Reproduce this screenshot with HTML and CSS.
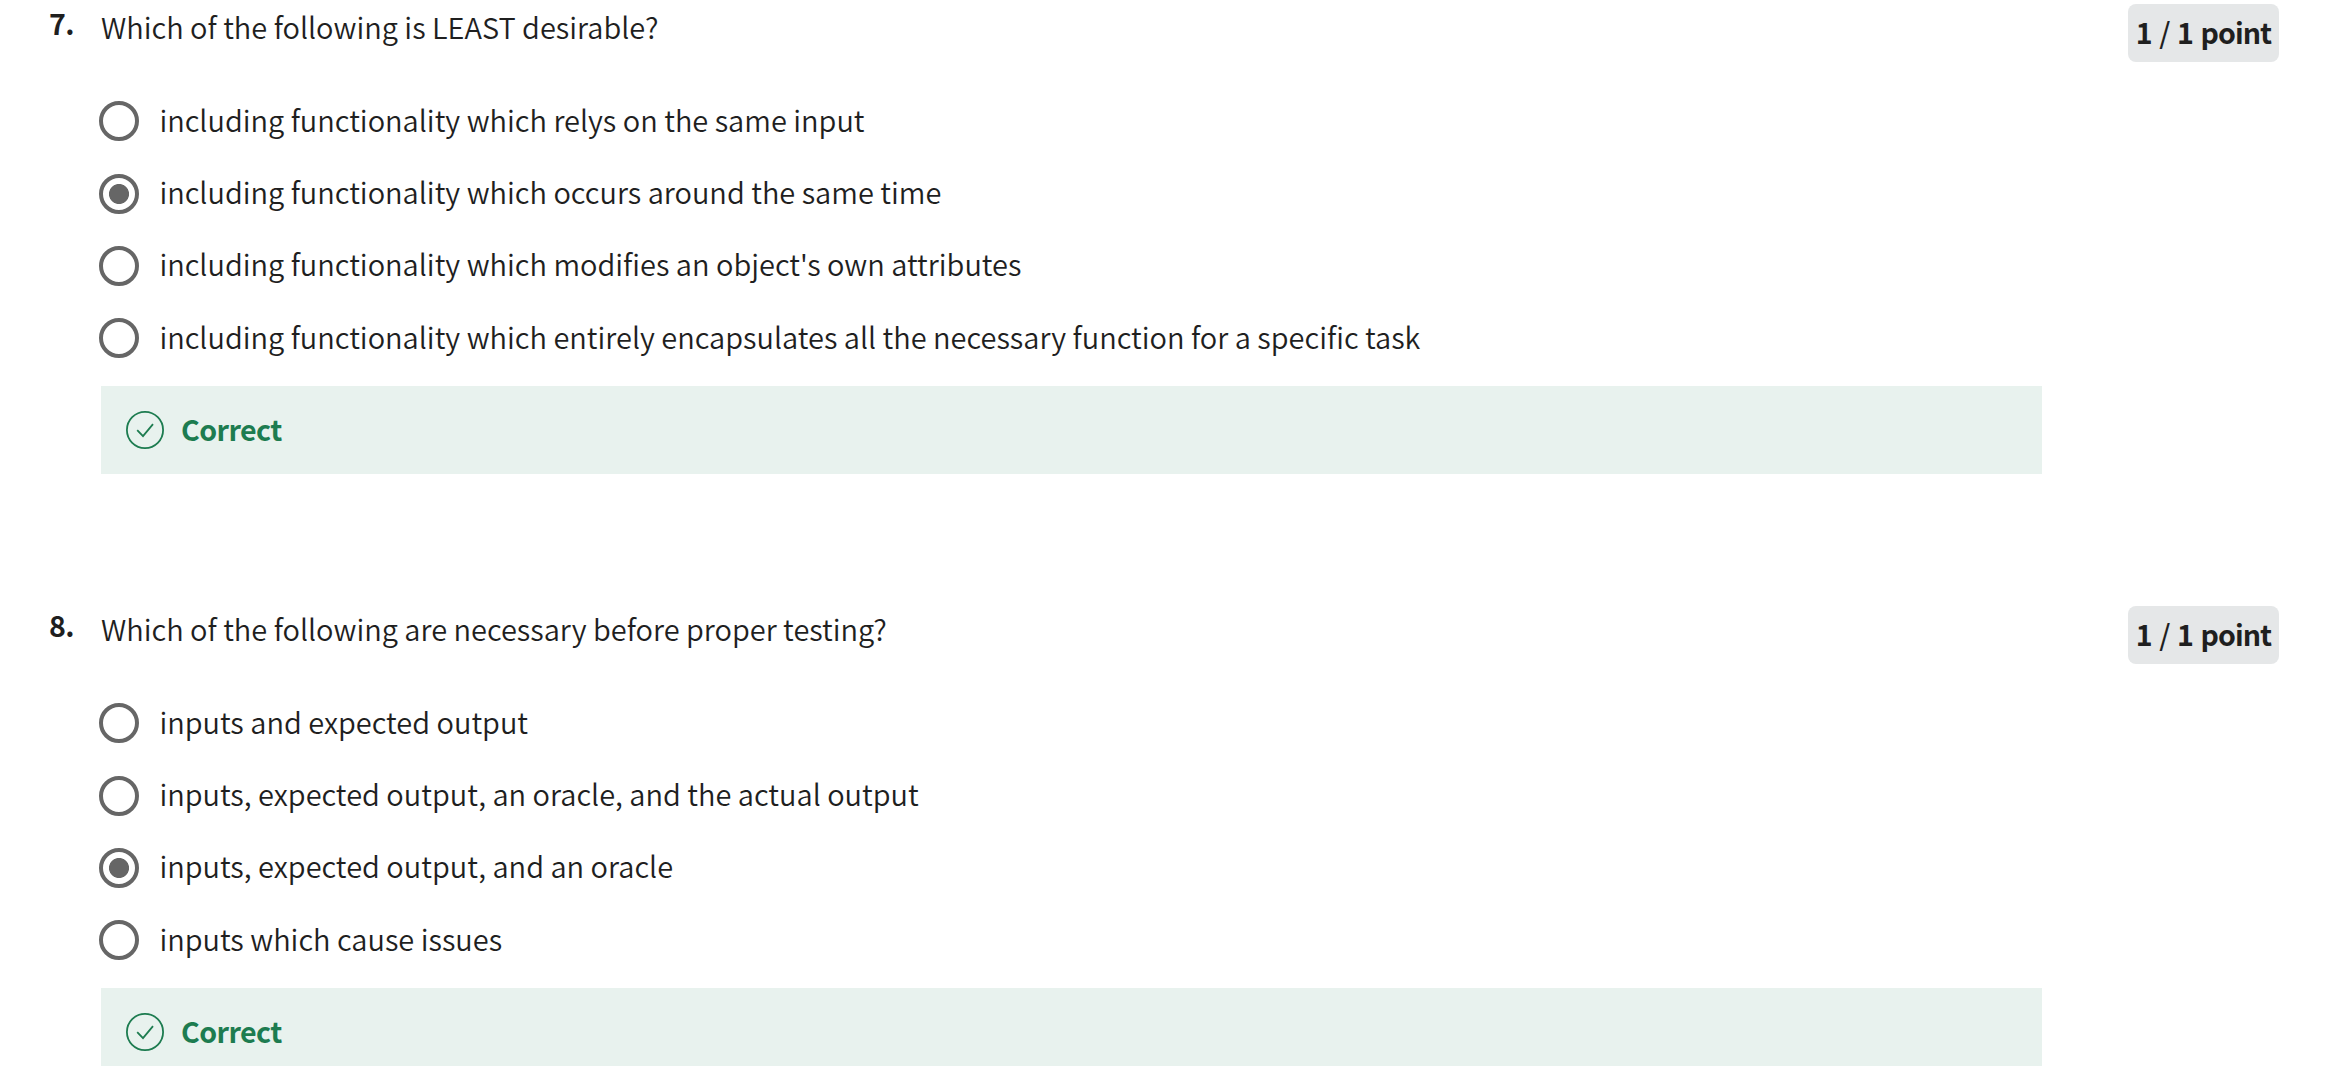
FILE: index.html
```html
<!DOCTYPE html>
<html lang="en">
<head>
<meta charset="utf-8">
<title>Quiz results</title>
<link rel="stylesheet" href="styles.css">
</head>
<body>
<main class="quiz">
  <section class="question">
    <div class="number">7.</div>
    <div class="content">
      <h2 class="prompt">Which of the following is LEAST desirable?</h2>
      <ul class="options">
        <li class="option"><span class="radio"></span><span class="label">including functionality which relys on the same input</span></li>
        <li class="option"><span class="radio checked"></span><span class="label">including functionality which occurs around the same time</span></li>
        <li class="option"><span class="radio"></span><span class="label">including functionality which modifies an object's own attributes</span></li>
        <li class="option"><span class="radio"></span><span class="label">including functionality which entirely encapsulates all the necessary function for a specific task</span></li>
      </ul>
      <div class="feedback">
        <svg class="check" viewBox="0 0 38 38"><circle cx="19" cy="19" r="18.1"/><path d="M11.2 19.2L17 25.1L27 13.2"/></svg>
        <span class="verdict">Correct</span>
      </div>
    </div>
    <div class="points">1 <span class="slash">/</span> 1 point</div>
  </section>
  <section class="question">
    <div class="number">8.</div>
    <div class="content">
      <h2 class="prompt">Which of the following are necessary before proper testing?</h2>
      <ul class="options">
        <li class="option"><span class="radio"></span><span class="label">inputs and expected output</span></li>
        <li class="option"><span class="radio"></span><span class="label">inputs, expected output, an oracle, and the actual output</span></li>
        <li class="option"><span class="radio checked"></span><span class="label">inputs, expected output, and an oracle</span></li>
        <li class="option"><span class="radio"></span><span class="label">inputs which cause issues</span></li>
      </ul>
      <div class="feedback">
        <svg class="check" viewBox="0 0 38 38"><circle cx="19" cy="19" r="18.1"/><path d="M11.2 19.2L17 25.1L27 13.2"/></svg>
        <span class="verdict">Correct</span>
      </div>
    </div>
    <div class="points">1 <span class="slash">/</span> 1 point</div>
  </section>
</main>
</body>
</html>
```

FILE: styles.css
```css
* { box-sizing: border-box; margin: 0; padding: 0; }
html { background: #fff; }
body {
  color: #1f1f1f;
  font: 350 28.97px/48px "Noto Sans CJK SC DemiLight", "Noto Sans CJK SC", sans-serif;
}
.quiz { height: 1066px; overflow: hidden; padding: 4px 68px 0 49px; }
.question {
  display: grid;
  grid-template-columns: 52px 1941px 1fr;
  align-items: start;
  height: 602px;
}
.number, .feedback, .points { font-family: "Noto Sans CJK SC", sans-serif; font-size: 28.6px; }
.number { margin-top: -5px; font-weight: 600; letter-spacing: -0.5px; }
.prompt { height: 48px; margin-top: -2px; font-size: inherit; font-weight: inherit; white-space: nowrap; }
.options { list-style: none; margin: 35px 0 0 -2px; }
.option { display: flex; align-items: center; height: 72.4px; gap: 20.4px; white-space: nowrap; }
.label { padding-bottom: 5px; }
.verdict { padding-bottom: 2px; }
.radio {
  width: 40px; height: 40px; flex: none;
  border: 4px solid #666;
  border-radius: 50%;
}
.radio.checked { background: radial-gradient(circle, #666 9.6px, transparent 10.4px); }
.feedback {
  display: flex; align-items: center; gap: 17px;
  height: 88px; margin-top: 11.4px; padding-left: 25px;
  background: #e8f2ee; color: #1d7c50; font-weight: 600; letter-spacing: -0.55px;
}
.check { width: 38px; height: 38px; fill: none; stroke: currentColor; stroke-width: 1.8; }
.points {
  justify-self: end;
  width: 151px; height: 58px; padding-bottom: 3px; border-radius: 8px;
  background: #e5e7e8; font-weight: 600; letter-spacing: -0.95px; word-spacing: 2px;
  text-align: center; line-height: 55px; white-space: nowrap;
}
.slash { font-weight: 500; }
```
